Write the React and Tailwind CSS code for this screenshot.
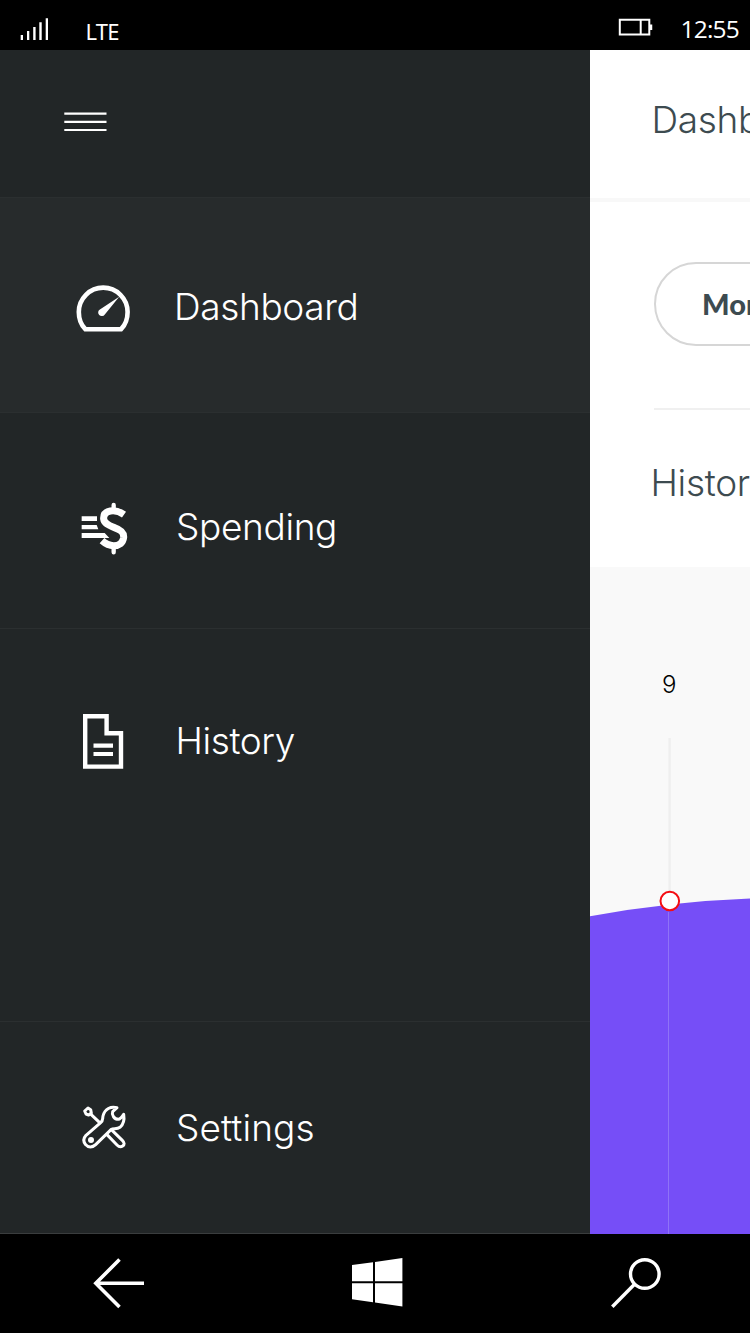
const light = "font-['Inter','Liberation_Sans',sans-serif] font-light whitespace-nowrap";

function GaugeIcon() {
  return (
    <svg className="h-16 w-16 shrink-0" viewBox="72 276 64 64" fill="none" stroke="#fff">
      <path strokeWidth="4.6" d="M85.3 329.2C80.9 324.7 78.8 318.6 78.8 312A24.4 24.4 0 0 1 127.6 312C127.6 318.6 125.5 324.7 121.1 329.2Z" />
      <path fill="#fff" stroke="none" d="M119.2 296.8L104.8 314.4A3.6 3.6 0 1 1 99.9 309.4Z" />
    </svg>
  );
}

function DollarIcon() {
  return (
    <svg className="h-16 w-16 shrink-0" viewBox="36 18 192 192" fill="none" stroke="#fff">
      <path strokeWidth="21" strokeLinejoin="round" d="M192 74C175 62 161 61 151 63C135 66 130 75 131 87C133 102 149 107 163 113C181 119 192 126 191 142C189 159 177 167 161 167C147 167 137 162 126 152" />
      <path strokeWidth="13" strokeLinecap="round" d="M161 45V62M161 169V187" />
      <path fill="#fff" stroke="none" d="M65 79H111V93H65ZM65 105H110L115 118H65ZM65 129H134L148 144H65Z" />
    </svg>
  );
}

function DocumentIcon() {
  return (
    <svg className="h-16 w-16 shrink-0" viewBox="72 709 64 64" fill="none" stroke="#fff" strokeWidth="4.4">
      <path d="M85.2 716.3H106.6V733.2H121V766.6H85.2Z" />
      <path d="M93.5 745.6H113M93.5 754H113" strokeWidth="4.2" />
    </svg>
  );
}

function ToolsIcon() {
  return (
    <svg className="h-16 w-16 shrink-0" viewBox="36 15 192 192" fill="none" stroke="#fff" strokeWidth="9" strokeLinejoin="round" strokeLinecap="round">
      <path d="M74 63L84 54L92 59L94 69L86 75L78 72Z" />
      <path d="M93 73L119 98" />
      <path d="M78 136L122 98C130 91 127 87 129 78C134 56 153 48 171 53L158 65C154 75 163 88 175 88C182 87 187 79 191 73C194 91 190 104 180 112C170 119 160 114 153 119L107 164C98 173 84 173 77 164C70 156 70 145 78 136Z" />
      <path d="M154 119L187 151C194 158 194 164 188 168C182 172 177 171 171 165L141 134" />
      <circle cx="93" cy="150" r="9" fill="#fff" stroke="none" />
    </svg>
  );
}

function MenuItem({ icon, label, className, labelClass }) {
  return (
    <a className={`flex items-start border-t border-[#2b2f30] pl-[72px] text-white ${className}`}>
      {icon}
      <span className={`${light} text-[37px] leading-[44px] ${labelClass}`}>{label}</span>
    </a>
  );
}

function StatusBar() {
  return (
    <header className="flex h-[50px] shrink-0 items-start bg-black text-white">
      <svg className="ml-5 mt-[18px] h-[22px] w-[30px]" viewBox="20 18 30 22" fill="#fff">
        <path d="M20.7 35h2.3v5h-2.3zM27 31h2.3v9H27zM33.2 27h2.4v13h-2.4zM39.3 22.3h2.4V40h-2.4zM45.7 18.2h2.3V40h-2.3z" />
      </svg>
      <span className="ml-[35.5px] mt-4 font-['Noto_Sans',sans-serif] text-[22px] leading-[30px] tracking-[-0.8px]">LTE</span>
      <svg className="ml-auto mt-4 h-6 w-9" viewBox="617 16 36 24" fill="none" stroke="#fff" strokeWidth="2">
        <path d="M619.8 19.8H649.3V34.6H619.8ZM640.7 20V34" />
        <path d="M651 24.5V30" strokeWidth="2.5" />
      </svg>
      <span className="ml-[26px] mr-[11px] mt-[12px] w-[60px] text-right font-['Open_Sans','Noto_Sans',sans-serif] text-[24.5px] leading-[34px] tracking-[-0.8px]">12:55</span>
    </header>
  );
}

function Drawer() {
  return (
    <nav className="flex w-[590px] shrink-0 flex-col border-b border-[#3a3d3e] bg-[#222627]">
      <div className="h-[147px] pl-16 pt-[62px]">
        <svg className="h-5 w-[43px]" viewBox="64 112 43 20" stroke="#fff" strokeWidth="2.2">
          <path d="M64.3 113.6H106.5M64.3 121.8H106.5M64.3 130H106.5" />
        </svg>
      </div>
      <MenuItem icon={<GaugeIcon />} label="Dashboard" className="h-[215px] bg-[#272b2c] pt-[78px]" labelClass="ml-[38px] mt-[9px] tracking-[-0.35px]" />
      <MenuItem icon={<DollarIcon />} label="Spending" className="h-[216px] pt-[83px]" labelClass="ml-[40px] mt-[9px] tracking-[-0.35px]" />
      <MenuItem icon={<DocumentIcon />} label="History" className="h-[393px] pt-[80px]" labelClass="ml-[39.5px] mt-[10px] tracking-[-0.4px]" />
      <MenuItem icon={<ToolsIcon />} label="Settings" className="grow pt-[73px]" labelClass="ml-[40px] mt-[11px] tracking-[0.1px]" />
    </nav>
  );
}

function Chart() {
  return (
    <section className="flex grow flex-col bg-[#f9f9f9]">
      <span className={`${light} ml-[72px] mt-[102px] h-8 text-[24px] leading-8 text-black`}>9</span>
      <svg className="mt-auto h-[503px] w-40" viewBox="590 731 160 503">
        <path d="M669.6 738V895" stroke="#efefef" strokeWidth="2.4" />
        <path fill="#764ef7" d="M590 916.3Q670 901.5 750 898.5V1234H590Z" />
        <path d="M668.5 912V1234" stroke="#8f73f6" strokeWidth="1" />
        <circle cx="669.8" cy="901" r="9.3" fill="#fff" stroke="#f40d12" strokeWidth="2" />
      </svg>
    </section>
  );
}

function Content() {
  return (
    <main className="flex w-40 shrink-0 flex-col overflow-hidden bg-white text-[#3d4b50]">
      <div className="h-[152px] border-b-4 border-[#f8f8f8] pl-[61.5px] pt-[48px]">
        <h1 className={`${light} text-[37px] leading-[44px] tracking-[-0.35px]`}>Dashboard</h1>
      </div>
      <div className="ml-16 mt-[60px] flex h-[84px] w-[300px] items-center rounded-full border-[2.4px] border-[#d6d6d6] pl-[46px]">
        <span className="font-['Lato',sans-serif] text-[29px] font-black leading-9">Month</span>
      </div>
      <div className="ml-16 mt-[62px] h-[2px] w-[300px] bg-[#f0f0f0]" />
      <h2 className={`${light} ml-[60.5px] mt-[51px] h-[106px] shrink-0 text-[37px] leading-[44px] tracking-[-0.3px]`}>History</h2>
      <Chart />
    </main>
  );
}

function NavigationBar() {
  return (
    <footer className="flex h-[99px] shrink-0 items-start justify-between bg-black pl-[92px] pr-[87px] pt-[23px]">
      <svg className="h-[54px] w-[54px]" viewBox="92 1257 54 54" fill="none" stroke="#fff" strokeWidth="3.6">
        <path d="M119.5 1259.5L95.8 1283.3L119.5 1307M97 1283.3H144" />
      </svg>
      <svg className="h-[54px] w-[54px]" viewBox="350.5 1257 54 54" fill="#fff">
        <path d="M351.5 1265L372.5 1262.2V1281.3H351.5ZM374.5 1261.9L401.9 1258V1281.3H374.5ZM351.5 1283.2H372.5V1302.3L351.5 1299.3ZM374.5 1283.2H401.9V1306.4L374.5 1302.5Z" />
      </svg>
      <svg className="h-[54px] w-[54px]" viewBox="609 1257 54 54" fill="none" stroke="#fff" strokeWidth="3.4">
        <circle cx="644.8" cy="1274" r="14.3" />
        <path d="M634.5 1284.2L612.3 1306.7" />
      </svg>
    </footer>
  );
}

export default function App() {
  return (
    <div className="flex h-[1333px] w-[750px] flex-col overflow-hidden bg-black">
      <StatusBar />
      <div className="flex h-[1184px] shrink-0">
        <Drawer />
        <Content />
      </div>
      <NavigationBar />
    </div>
  );
}
